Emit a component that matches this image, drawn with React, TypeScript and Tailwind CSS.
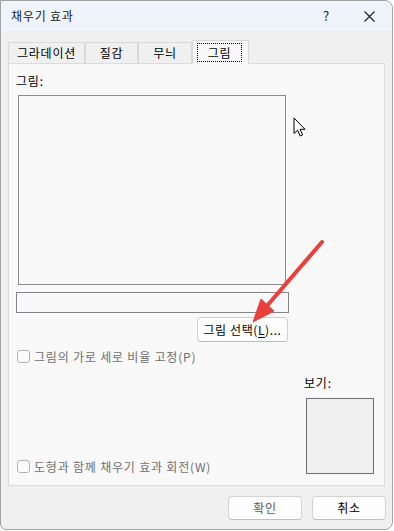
import React from "react";

const font = { fontFamily: '"Noto Sans CJK KR", "Noto Sans", sans-serif' };

function Checkbox({ label }: { label: string }) {
  return (
    <div className="flex items-center h-[13px]">
      <div className="w-[13px] h-[13px] rounded-[3px] border border-[#b5b5b5] bg-[#fbfbfb]" />
      <span className="ml-[4px] text-[12px] leading-[14px] tracking-[0.8px] text-[#6e6e6e]">{label}</span>
    </div>
  );
}

export default function App() {
  return (
    <div className="relative w-[394px] h-[531px] bg-white tracking-[0.8px]" style={font}>
      <div className="w-[393px] h-[530px] border border-[#a3a3a3] rounded-r-[8px] rounded-bl-[6px] overflow-hidden bg-[#f0f0f0] flex flex-col">
        {/* Title bar */}
        <div className="h-[30px] bg-[#eef4f9] flex items-center shrink-0">
          <span className="ml-[10px] text-[12px] leading-[16px] text-[#1a1a1a]">채우기 효과</span>
          <span className="ml-auto text-[13px] leading-[16px] text-[#1a1a1a] mr-[34px]">?</span>
          <svg width="11" height="11" viewBox="0 0 11 11" className="mr-[17px]">
            <path d="M0.5 0.5 L10.5 10.5 M10.5 0.5 L0.5 10.5" stroke="#1a1a1a" strokeWidth="1.1" />
          </svg>
        </div>

        <div className="px-[7px] flex flex-col">
          {/* Tabs */}
          <div className="mt-[9px] h-[23px] flex items-end relative z-10">
            <div className="w-[77px] h-[21px] border border-b-0 border-[#d9d9d9] bg-[#f0f0f0] flex items-center justify-center text-[12px] leading-[16px] text-black">
              그라데이션
            </div>
            <div className="w-[53px] h-[21px] border border-b-0 border-[#d9d9d9] bg-[#f0f0f0] flex items-center justify-center text-[12px] leading-[16px] text-black">
              질감
            </div>
            <div className="w-[54px] h-[21px] border border-b-0 border-[#d9d9d9] bg-[#f0f0f0] flex items-center justify-center text-[12px] leading-[16px] text-black">
              무늬
            </div>
            <div className="w-[57px] h-[24px] -mb-px border border-b-0 border-[#d9d9d9] bg-[#f9f9f9] flex items-start">
              <div className="ml-[4px] mt-[2px] w-[45px] h-[19px] border border-dotted border-black flex items-center justify-center text-[12px] leading-[16px] text-black">
                그림
              </div>
            </div>
          </div>

          {/* Panel */}
          <div className="h-[423px] border border-[#dcdcdc] bg-[#f9f9f9] flex flex-col">
            <div className="ml-[7px] mt-[9px] text-[12px] leading-[16px] text-black">그림:</div>
            <div className="ml-[9px] mt-[6px] w-[268px] h-[190px] border border-[#8c8c90] bg-[#f9f9f9] shrink-0" />
            <div className="ml-[7px] mt-[7px] w-[273px] h-[21px] border border-[#84848a] bg-[#f9f9f9] shrink-0" />
            <div className="ml-[188px] mt-[4px] w-[91px] h-[25px] rounded-[4px] border border-[#d0d0d0] border-b-[#bdbdbd] bg-[#fdfdfd] flex items-center justify-center text-[12px] leading-[16px] text-black shrink-0 tracking-[0.6px]">
              <span>
                그림 선택(<span className="underline underline-offset-2">L</span>)...
              </span>
            </div>
            <div className="ml-[8px] mt-[8px]">
              <Checkbox label="그림의 가로 세로 비율 고정(P)" />
            </div>
            <div className="mt-[12px] flex items-end">
              <div className="ml-[8px] mb-[1px]">
                <Checkbox label="도형과 함께 채우기 효과 회전(W)" />
              </div>
              <div className="ml-auto mr-[10px] w-[70px] flex flex-col">
                <div className="text-[12px] leading-[16px] text-black">보기:</div>
                <div className="ml-[2px] mt-[7px] w-[68px] h-[76px] border border-[#707070] bg-[#f0f0f0]" />
              </div>
            </div>
          </div>

          {/* Buttons */}
          <div className="mt-[10px] -mr-[1px] flex justify-end gap-[10px]">
            <div className="w-[74px] h-[24px] rounded-[4px] border border-[#d3d3d3] border-b-[#c0c0c0] bg-[#fdfdfd] flex items-center justify-center text-[12px] leading-[16px] text-[#5c5c5c]">
              확인
            </div>
            <div className="w-[74px] h-[24px] rounded-[4px] border border-[#d3d3d3] border-b-[#c0c0c0] bg-[#fdfdfd] flex items-center justify-center text-[12px] leading-[16px] text-black">
              취소
            </div>
          </div>
        </div>
      </div>

      {/* Mouse cursor */}
      <svg className="absolute left-[293px] top-[117px]" width="14" height="21" viewBox="0 0 14 21">
        <path
          d="M1 1 L1 16.5 L4.6 13.2 L7.2 19 L9.6 18 L7.1 12.3 L12 12.3 Z"
          fill="white"
          stroke="black"
          strokeWidth="1"
          strokeLinejoin="round"
        />
      </svg>

      {/* Red annotation arrow */}
      <svg className="absolute left-0 top-0 pointer-events-none" width="394" height="531" viewBox="0 0 394 531">
        <line x1="322" y1="242" x2="266" y2="307" stroke="#ea3f3a" strokeWidth="4" strokeLinecap="round" />
        <polygon points="253,322 274,311 261,299" fill="#ea3f3a" stroke="#ea3f3a" strokeWidth="1" strokeLinejoin="round" />
      </svg>
    </div>
  );
}
